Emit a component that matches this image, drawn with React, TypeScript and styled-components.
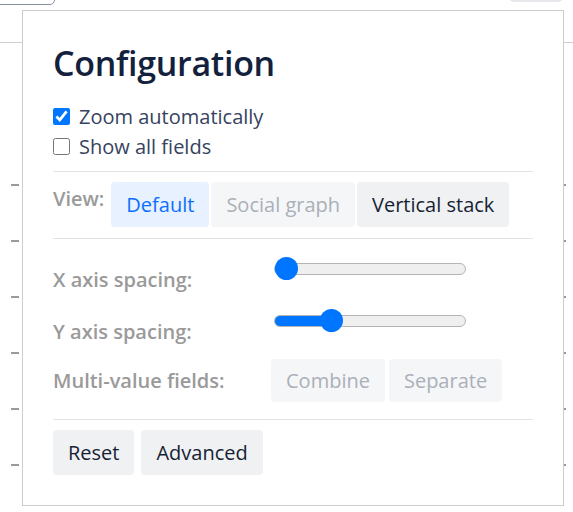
import React, { useState } from "react";
import styled, { createGlobalStyle } from "styled-components";

const GlobalStyle = createGlobalStyle`
  html, body {
    margin: 0;
    padding: 0;
    background: #fff;
    font-family: "Open Sans", "Noto Sans", Arial, sans-serif;
  }
  * { box-sizing: border-box; }
`;

const Page = styled.div`
  position: relative;
  width: 573px;
  height: 512px;
  overflow: hidden;
`;

const Toolbar = styled.div`
  display: flex;
  justify-content: space-between;
  align-items: flex-end;
  height: 43px;
  border-bottom: 1px solid #cfcfcf;
`;

const ToolButton = styled.div<{ $tone: "outline" | "grey" }>`
  height: 30px;
  margin-top: ${(p) => (p.$tone === "outline" ? "-25px" : "-28px")};
  align-self: flex-start;
  border-radius: 5px;
  ${(p) =>
    p.$tone === "outline"
      ? `width: 60px; margin-left: -5px; border: 1px solid #8a93a6;`
      : `width: 54px; margin-right: 10px; background: #e6e8eb;`}
`;

const Chart = styled.svg`
  display: block;
`;

const Panel = styled.div`
  position: absolute;
  left: 22px;
  top: 10px;
  width: 542px;
  height: 496px;
  background: #fff;
  border: 1px solid #cccccc;
  padding: 30px;
`;

const Title = styled.h1`
  margin: 1px 0 17px;
  font-size: 34px;
  line-height: 42px;
  font-weight: 600;
  color: #14213d;
  letter-spacing: -0.3px;
`;

const CheckRow = styled.label`
  display: flex;
  align-items: center;
  height: 30px;
  font-size: 20px;
  color: #36435e;
  cursor: pointer;
`;

const Check = styled.input.attrs({ type: "checkbox" })`
  width: 17px;
  height: 17px;
  margin: 0 9px 0 0;
  accent-color: #0075ff;
`;

const Divider = styled.hr<{ $top: number; $bottom: number }>`
  border: none;
  border-top: 1px solid #e3e3e3;
  margin: ${(p) => p.$top}px 0 ${(p) => p.$bottom}px;
`;

const ViewRow = styled.div`
  display: flex;
  align-items: flex-start;
  gap: 2px;
`;

const Label = styled.span`
  font-size: 20px;
  line-height: 30px;
  font-weight: 600;
  color: #9a9a9a;
`;

const ViewLabel = styled(Label)`
  margin-top: 2px;
  margin-right: 5px;
`;

const Btn = styled.button<{ $variant: "active" | "muted" | "plain" }>`
  height: 45px;
  padding: 0 15px;
  border: none;
  border-radius: 4px;
  font-family: inherit;
  font-size: 20px;
  cursor: pointer;
  background: ${(p) =>
    p.$variant === "active" ? "#e7f1ff" : p.$variant === "muted" ? "#f5f6f8" : "#f0f1f3"};
  color: ${(p) =>
    p.$variant === "active" ? "#0d6efd" : p.$variant === "muted" ? "#aab0b8" : "#161f33"};
`;

const Grid = styled.div`
  display: grid;
  grid-template-columns: 221px 1fr;
  row-gap: 14px;
  align-items: start;
`;

const SliderLabel = styled(Label)`
  margin-top: 8px;
`;

const Range = styled.input.attrs({ type: "range" })`
  -webkit-appearance: none;
  appearance: none;
  width: 192px;
  height: 23px;
  margin: 0;
  background: transparent;

  &::-webkit-slider-runnable-track {
    height: 12px;
    border: 1px solid #b4b4b4;
    border-radius: 6px;
    background: linear-gradient(
      to right,
      #0075ff var(--fill),
      #efefef var(--fill)
    );
  }

  &::-webkit-slider-thumb {
    -webkit-appearance: none;
    width: 23px;
    height: 23px;
    margin-top: -6.5px;
    border: none;
    border-radius: 50%;
    background: #0075ff;
  }
`;

const MultiRow = styled.div`
  grid-column: 1 / 3;
  display: flex;
  align-items: center;
  margin-top: -2px;
`;

const MultiLabel = styled(Label)`
  width: 218px;
`;

const Group = styled.div<{ $gap: number }>`
  display: flex;
  gap: ${(p) => p.$gap}px;
`;

const SmallBtn = styled(Btn)`
  height: 43px;
`;

const Footer = styled.div`
  display: flex;
  gap: 7px;
`;

const tickYs = [185, 241, 297, 353, 409, 465];

export default function App() {
  const [zoom, setZoom] = useState(true);
  const [showAll, setShowAll] = useState(false);
  const [xs, setXs] = useState(0);
  const [ys, setYs] = useState(27);

  const fill = (v: number) => ({ ["--fill" as any]: `${11.5 + (v / 100) * 169}px` });

  return (
    <>
      <GlobalStyle />
      <Page>
        <Toolbar>
          <ToolButton $tone="outline" />
          <ToolButton $tone="grey" />
        </Toolbar>
        <Chart width="573" height="468" viewBox="0 43 573 468">
          {tickYs.map((y) => (
            <g key={y}>
              <rect x="11" y={y - 1} width="8" height="2" fill="#9b9b9b" />
              <rect x="564" y={y - 1} width="2" height="2" fill="#9b9b9b" />
            </g>
          ))}
        </Chart>

        <Panel>
          <Title>Configuration</Title>
          <CheckRow>
            <Check checked={zoom} onChange={(e) => setZoom(e.target.checked)} />
            Zoom automatically
          </CheckRow>
          <CheckRow>
            <Check checked={showAll} onChange={(e) => setShowAll(e.target.checked)} />
            Show all fields
          </CheckRow>

          <Divider $top={10} $bottom={10} />

          <ViewRow>
            <ViewLabel>View:</ViewLabel>
            <Btn $variant="active">Default</Btn>
            <Btn $variant="muted">Social graph</Btn>
            <Btn $variant="plain">Vertical stack</Btn>
          </ViewRow>

          <Divider $top={11} $bottom={18} />

          <Grid>
            <SliderLabel>X axis spacing:</SliderLabel>
            <Range
              min={0}
              max={100}
              value={xs}
              onChange={(e) => setXs(Number(e.target.value))}
              style={fill(xs) as React.CSSProperties}
            />
            <SliderLabel>Y axis spacing:</SliderLabel>
            <Range
              min={0}
              max={100}
              value={ys}
              onChange={(e) => setYs(Number(e.target.value))}
              style={fill(ys) as React.CSSProperties}
            />
            <MultiRow>
              <MultiLabel>Multi-value fields:</MultiLabel>
              <Group $gap={4}>
                <SmallBtn $variant="muted">Combine</SmallBtn>
                <SmallBtn $variant="muted">Separate</SmallBtn>
              </Group>
            </MultiRow>
          </Grid>

          <Divider $top={17} $bottom={10} />

          <Footer>
            <Btn $variant="plain">Reset</Btn>
            <Btn $variant="plain">Advanced</Btn>
          </Footer>
        </Panel>
      </Page>
    </>
  );
}
